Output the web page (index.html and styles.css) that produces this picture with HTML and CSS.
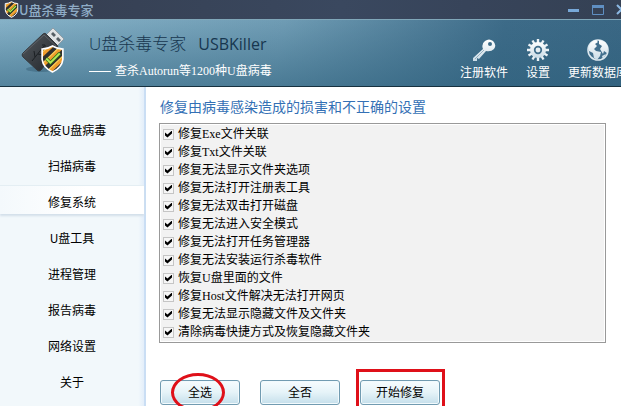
FILE: index.html
```html
<!DOCTYPE html>
<html lang="zh-CN">
<head>
<meta charset="utf-8">
<title>U盘杀毒专家</title>
<link rel="stylesheet" href="styles.css">
</head>
<body>
<svg class="defs" width="0" height="0" aria-hidden="true">
  <defs>
    <clipPath id="shield-clip"><path d="M2 4Q7 4 12 1Q17 4 22 4V14Q21 22 12 26Q3 22 2 14Z"/></clipPath>
    <linearGradient id="metal" x1="0" y1="0" x2="0" y2="1"><stop offset="0" stop-color="#fff"/><stop offset="1" stop-color="#c9dbe6"/></linearGradient>
    <linearGradient id="stick" x1="0" y1="0" x2="1" y2="1"><stop offset="0" stop-color="#54585d"/><stop offset="1" stop-color="#20252a"/></linearGradient>
    <symbol id="shield" viewBox="0 0 24 27">
      <g clip-path="url(#shield-clip)">
        <path fill="#30302d" d="M0 0H24V27H0Z"/>
        <path stroke="#f09c2c" stroke-width="4" d="M-2 13L15-3M-1 23L25-2M5 29L27 8"/>
        <path stroke="#f3d261" stroke-width="1" d="M-2 11L14-4M-1 21L24-3M5 27L27 6"/>
      </g>
      <path fill="none" stroke="#fff" stroke-width="1.6" d="M2 4Q7 4 12 1Q17 4 22 4V14Q21 22 12 26Q3 22 2 14Z"/>
      <path fill="none" stroke="#357b16" stroke-width="3.4" d="M6 13L10 17L19 8"/>
      <path fill="none" stroke="#b7e85b" stroke-width="1.8" d="M6 13L10 17L19 8"/>
    </symbol>
  </defs>
</svg>
<div class="window">
  <div class="titlebar">
    <svg class="title-icon" aria-hidden="true"><use href="#shield"/></svg>
    <span class="title">U盘杀毒专家</span>
    <div class="controls">
      <button type="button" aria-label="最小化"><svg width="12" height="12" viewBox="0 0 12 12"><path fill="#77a8d8" d="M0 5H11V8H0Z"/></svg></button>
      <button type="button" aria-label="最大化"><svg width="12" height="12" viewBox="0 0 12 12"><path fill="none" stroke="#5f8fc2" d="M.5 1.5H11.5V10.5H.5Z"/><path fill="#5f8fc2" d="M0 1H12V4H0Z"/></svg></button>
      <button type="button" aria-label="关闭"><svg width="12" height="12" viewBox="0 0 12 12"><path stroke="#8bb8e3" stroke-width="2" d="M1 1L10 10M10 1L1 10"/></svg></button>
    </div>
  </div>
  <header class="header">
    <svg class="logo" viewBox="0 0 46 46" aria-hidden="true">
      <ellipse cx="20" cy="42" rx="15" ry="3" fill="#2c5269" opacity=".4"/>
      <path fill="#dfe2e4" stroke="#838b90" stroke-width=".7" d="M25 8L32 1L43 12L35 20Z"/>
      <path fill="#555d63" d="M32 5L35 8L33 10L30 7ZM37 10L40 13L38 15L35 12Z"/>
      <path fill="url(#stick)" stroke="#35393d" d="M2 26L22 7Q24 5 26 8L36 18Q38 20 36 23L20 43Q18 45 16 43L2 30Q0 28 2 26Z"/>
      <path fill="none" stroke="#686d72" stroke-width=".7" d="M2 27L23 8L35 19"/>
      <path fill="none" stroke="#1b1f23" d="M11 34L23 19M14 30L13 24M17 27L22 28M21 18L24 18L24 21"/>
      <use href="#shield" x="19" y="18" width="25" height="28"/>
    </svg>
    <div class="brand">
      <h1>U盘杀毒专家<span>USBKiller</span></h1>
      <p>查杀Autorun等1200种U盘病毒</p>
    </div>
    <div class="tools">
      <button type="button">
        <svg width="24" height="24" viewBox="0 0 24 24" aria-hidden="true"><path fill="url(#metal)" fill-rule="evenodd" d="M11 11Q9 6 13 3Q17 0 21 3Q25 7 22 11Q19 14 14 13L7 21L5 20L5 23L1 23V20ZM18 4A2 2 0 1 0 18 8A2 2 0 1 0 18 4Z"/><path stroke="#7998aa" stroke-width=".7" d="M3 21L12 12"/></svg>
        <span>注册软件</span>
      </button>
      <button type="button">
        <svg width="24" height="24" viewBox="0 0 24 24" aria-hidden="true"><g stroke="#edf3f7" stroke-width="2.4"><path d="M12 1V23M1 12H23M6.5 2.5L17.5 21.5M2.5 6.5L21.5 17.5M2.5 17.5L21.5 6.5M6.5 21.5L17.5 2.5"/></g><circle cx="12" cy="12" r="8" fill="url(#metal)"/><circle cx="12" cy="12" r="3.3" fill="#e8eff3" stroke="#416e8b" stroke-width="1.7"/></svg>
        <span>设置</span>
      </button>
      <button type="button">
        <svg width="24" height="24" viewBox="0 0 24 24" aria-hidden="true"><circle cx="12" cy="12" r="10" fill="#426f8d" stroke="#dce8ef" stroke-width="1.6"/><path fill="url(#metal)" d="M3 8Q5 3 10 2L12 4L9 6L11 8L8 11L10 13L15 14L14 18L11 22L8 20L7 15L3 13ZM13 2L19 4L22 9L21 15L18 13L17 16L14 11L16 8L13 6ZM16 18L20 16L17 21Z"/></svg>
        <span>更新数据库</span>
      </button>
    </div>
  </header>
  <div class="body">
    <nav class="sidebar">
      <button type="button">免疫U盘病毒</button>
      <button type="button">扫描病毒</button>
      <button type="button" class="active" aria-current="page">修复系统</button>
      <button type="button">U盘工具</button>
      <button type="button">进程管理</button>
      <button type="button">报告病毒</button>
      <button type="button">网络设置</button>
      <button type="button">关于</button>
    </nav>
    <main class="content">
      <h2>修复由病毒感染造成的损害和不正确的设置</h2>
      <div class="list">
        <label><input type="checkbox" checked>修复Exe文件关联</label>
        <label><input type="checkbox" checked>修复Txt文件关联</label>
        <label><input type="checkbox" checked>修复无法显示文件夹选项</label>
        <label><input type="checkbox" checked>修复无法打开注册表工具</label>
        <label><input type="checkbox" checked>修复无法双击打开磁盘</label>
        <label><input type="checkbox" checked>修复无法进入安全模式</label>
        <label><input type="checkbox" checked>修复无法打开任务管理器</label>
        <label><input type="checkbox" checked>修复无法安装运行杀毒软件</label>
        <label><input type="checkbox" checked>恢复U盘里面的文件</label>
        <label><input type="checkbox" checked>修复Host文件解决无法打开网页</label>
        <label><input type="checkbox" checked>修复无法显示隐藏文件及文件夹</label>
        <label><input type="checkbox" checked>清除病毒快捷方式及恢复隐藏文件夹</label>
      </div>
      <div class="actions">
        <div class="action circled"><button type="button">全选</button></div>
        <div class="action"><button type="button">全否</button></div>
        <div class="action boxed"><button type="button">开始修复</button></div>
      </div>
    </main>
  </div>
</div>
</body>
</html>
```
FILE: styles.css
```css
*,
*::before,
*::after { box-sizing: border-box; }

body {
  margin: 0;
  overflow: hidden;
  font: 12px/18px "Liberation Serif", "Noto Sans CJK SC", sans-serif;
  color: #000;
  background: #fff;
}

button {
  border: 0;
  padding: 0;
  background: none;
  color: inherit;
  font: 12px/18px "Noto Sans CJK SC", sans-serif;
  white-space: nowrap;
}

svg { display: block; flex: none; }
.defs { position: absolute; }

.window {
  display: flex;
  flex-direction: column;
  height: 100vh;
  overflow: hidden;
}

.titlebar {
  display: flex;
  flex: none;
  align-items: center;
  height: 19px;
  padding-left: 4px;
  background: linear-gradient(90deg, #353e50, #3a485f 55%, #37445a 75%, #354154);
}

.title-icon { width: 15px; height: 17px; }

.title {
  color: #8facc6;
  font: 500 13px/18px "Noto Sans CJK SC", sans-serif;
}

.controls {
  display: flex;
  gap: 12px;
  margin-left: auto;
  margin-right: -7px;
}

.header {
  display: flex;
  flex: none;
  height: 68px;
  padding-left: 21px;
  border-top: 1px solid #80a7b9;
  border-bottom: 1px solid #17313f;
  background:
    linear-gradient(transparent, rgba(45, 96, 124, 0.55)),
    linear-gradient(100deg, #86b2c8, #6f9cb4 45%, #3d6b88 80%, #3a6784);
}

.logo { width: 46px; height: 46px; margin-top: 7px; }

.brand { margin: 12px 0 0 22px; }

.brand h1 {
  margin: 0;
  color: #17364f;
  font: 17px/24px "Open Sans", "Noto Sans CJK SC", sans-serif;
  font-weight: 300;
  white-space: nowrap;
}

.brand h1 span {
  margin-left: 12px;
  font-size: 16px;
  font-weight: 400;
}

.brand p {
  display: flex;
  align-items: center;
  gap: 4px;
  margin: 6px 0 0;
  color: #fff;
  line-height: 18px;
  white-space: nowrap;
}

.brand p::before {
  content: "";
  width: 22px;
  height: 1px;
  background: #fff;
}

.tools {
  display: flex;
  gap: 18px;
  margin-left: auto;
  margin-right: -7px;
  padding-top: 18px;
}

.tools button {
  display: flex;
  flex-direction: column;
  align-items: center;
  gap: 1px;
  color: #fff;
}

.body { display: flex; flex: 1; min-height: 0; }

.sidebar {
  display: flex;
  flex: none;
  flex-direction: column;
  gap: 8px;
  width: 146px;
  padding-top: 27px;
  border-right: 2px solid #cadef4;
  background: linear-gradient(90deg, #f2f8fb 96%, #e3eefa);
}

.sidebar button {
  height: 28px;
  flex: none;
  padding: 7px 0 3px;
}

.sidebar .active {
  background: linear-gradient(90deg, #f4f9fc, #fff 60%);
  box-shadow: 0 2px 2px #d3dfea, 0 -1px 0 #e4eef3;
}

.content { flex: 1; min-width: 0; padding: 9px 15px 0 13px; }

h2 {
  margin: 0 0 7px;
  padding-left: 1px;
  color: #3370b5;
  font: 14px/20px "Noto Sans CJK SC", sans-serif;
}

.list {
  padding: 1px 3px;
  border: 1px solid #999;
  background: #f2f2f2;
  box-shadow: inset 0 0 0 1px #fff;
}

.list label {
  display: flex;
  align-items: center;
  gap: 4px;
  height: 18px;
  white-space: nowrap;
}

.list input {
  appearance: none;
  width: 11px;
  height: 11px;
  margin: 0;
  display: grid;
  place-items: center;
  border: 1px solid #c5c5c5;
  background: #f6f6f6;
}

.list input:checked::before {
  content: "";
  width: 7px;
  height: 7px;
  background: #000;
  clip-path: polygon(0 28%, 35% 58%, 100% 0, 100% 42%, 35% 100%, 0 71%);
}

.actions {
  display: flex;
  gap: 20px;
  margin-top: 37px;
  padding-left: 1px;
}

.action { position: relative; width: 80px; }

.action button {
  width: 100%;
  height: 25px;
  padding-bottom: 2px;
  border: 1px solid #719bb1;
  border-radius: 3px;
  background: linear-gradient(#f7fcfe, #e5f3f8 50%, #c5dfeb);
  box-shadow: inset 0 0 0 1px #f2fafd;
}

.circled::after,
.boxed::after {
  content: "";
  position: absolute;
  pointer-events: none;
}

.circled::after {
  top: -7px;
  left: 11px;
  width: 54px;
  height: 39px;
  border: 3px solid #df1019;
  border-radius: 50%;
}

.boxed::after {
  inset: -11px -5px -8px -4px;
  border: 3px solid #df1019;
}
```
